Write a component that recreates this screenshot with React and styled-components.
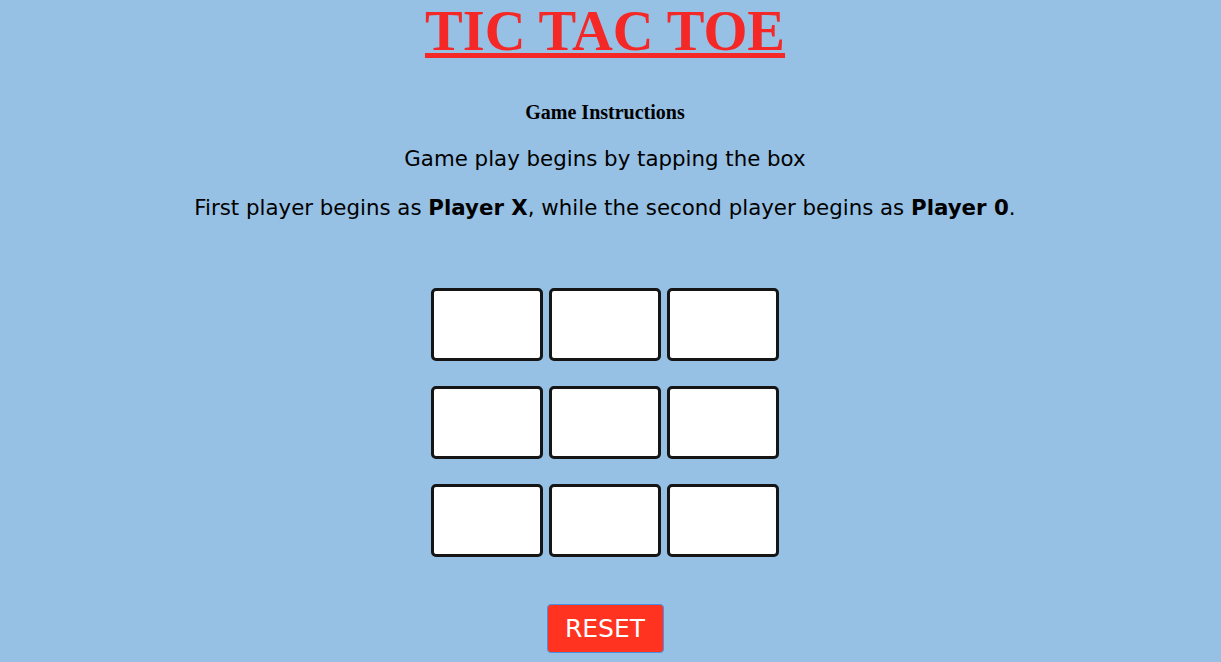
import React, { useState } from 'react';
import styled, { createGlobalStyle } from 'styled-components';

const GlobalStyle = createGlobalStyle`
    html, body {
        margin: 0;
        padding: 0;
        background-color: #96c0e4;
    }
`;

const Page = styled.div`
    width: 1210px;
    min-height: 662px;
    display: flex;
    flex-direction: column;
    align-items: center;
    font-family: "DejaVu Sans", Verdana, sans-serif;
    color: #000;
`;

const Title = styled.h1`
    margin: 0;
    font-family: "Liberation Serif", "Times New Roman", serif;
    font-size: 56.5px;
    line-height: 62px;
    font-weight: bold;
    color: #f52828;
    text-decoration: underline;
    text-decoration-thickness: 5px;
    text-underline-offset: 3px;
`;

const Heading = styled.h3`
    margin: 39px 0 0;
    font-family: "Liberation Serif", "Times New Roman", serif;
    font-size: 20px;
    line-height: 22px;
    font-weight: bold;
`;

const Text = styled.p`
    margin: ${(p) => p.$top}px 0 0;
    font-size: 21.33px;
    line-height: 24px;
    b {
        font-weight: bold;
    }
`;

const Board = styled.div`
    margin-top: 68px;
    display: grid;
    grid-template-columns: repeat(3, 112px);
    grid-auto-rows: 73px;
    column-gap: 6px;
    row-gap: 25px;
`;

const Cell = styled.button`
    box-sizing: border-box;
    margin: 0;
    padding: 0;
    background-color: #fff;
    border: 3px solid #151515;
    border-radius: 5px;
    font-family: "DejaVu Sans", sans-serif;
    font-size: 40px;
    font-weight: bold;
    cursor: pointer;
`;

const ResetButton = styled.button`
    box-sizing: border-box;
    margin-top: 47px;
    width: 117px;
    height: 49px;
    padding: 0;
    background-color: #ff3320;
    color: #fff;
    border: 1px solid #4a8fe0;
    border-radius: 4px;
    font-family: "DejaVu Sans", Verdana, sans-serif;
    font-size: 25px;
    cursor: pointer;
`;

export default function App() {
    const [cells, setCells] = useState(Array(9).fill(''));
    const [turn, setTurn] = useState('X');

    const play = (index) => {
        if (cells[index]) return;
        const next = [...cells];
        next[index] = turn;
        setCells(next);
        setTurn(turn === 'X' ? '0' : 'X');
    };

    const reset = () => {
        setCells(Array(9).fill(''));
        setTurn('X');
    };

    return (
        <>
            <GlobalStyle />
            <Page>
                <Title>TIC TAC TOE</Title>
                <Heading>Game Instructions</Heading>
                <Text $top={24}>Game play begins by tapping the box</Text>
                <Text $top={25}>
                    First player begins as <b>Player X</b>, while the second player begins as <b>Player 0</b>.
                </Text>
                <Board>
                    {cells.map((value, index) => (
                        <Cell key={index} onClick={() => play(index)}>
                            {value}
                        </Cell>
                    ))}
                </Board>
                <ResetButton onClick={reset}>RESET</ResetButton>
            </Page>
        </>
    );
}
